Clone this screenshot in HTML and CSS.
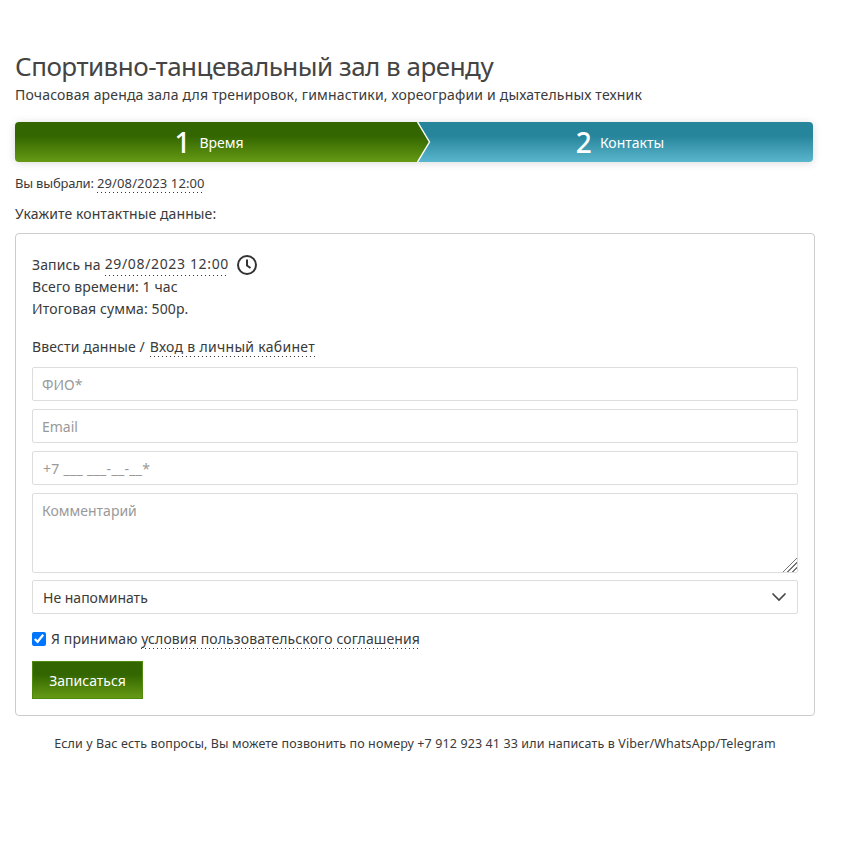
FILE: index.html
```html
<!DOCTYPE html>
<html lang="ru">
<head>
    <meta charset="UTF-8">
    <meta name="viewport" content="width=device-width, initial-scale=1.0">
    <title>Спортивно-танцевальный зал в аренду</title>
    <link rel="stylesheet" href="styles.css">
</head>
<body>
    <div class="container">
        <h1>Спортивно-танцевальный зал в аренду</h1>
        <p class="subtitle">Почасовая аренда зала для тренировок, гимнастики, хореографии и дыхательных техник</p>

        <div class="steps">
            <div class="step step-active">
                <span class="step-num">1</span>
                <span class="step-name">Время</span>
                <svg class="step-arrow" width="14" height="40" viewBox="0 0 14 40">
                    <defs>
                        <linearGradient id="arrowGreen" x1="0" y1="0" x2="0" y2="1">
                            <stop offset="0.35" stop-color="#336600"/>
                            <stop offset="1" stop-color="#669a14"/>
                        </linearGradient>
                    </defs>
                    <path d="M0 0 L12.5 20 L0 40 Z" fill="url(#arrowGreen)"/>
                    <path d="M0.5 0 L12.5 20 L0.5 40" fill="none" stroke="#fff" stroke-width="1.4"/>
                </svg>
            </div>
            <div class="step step-next">
                <span class="step-num">2</span>
                <span class="step-name">Контакты</span>
            </div>
        </div>

        <p class="chosen">Вы выбрали: <a class="dotted date" href="#">29/08/2023 12:00</a></p>
        <p class="prompt">Укажите контактные данные:</p>

        <form class="panel">
            <div class="summary">
                <div class="summary-line"><span>Запись на</span> <a class="dotted date" href="#">29/08/2023 12:00</a>
                    <svg class="clock" width="22" height="22" viewBox="0 0 22 22">
                        <circle cx="11" cy="11" r="9" fill="none" stroke="#333" stroke-width="2"/>
                        <path d="M11 5.5 V11.5 L14.5 14" fill="none" stroke="#333" stroke-width="2"/>
                    </svg>
                </div>
                <div>Всего времени: 1 час</div>
                <div>Итоговая сумма: 500р.</div>
            </div>
            <div class="login-line">Ввести данные / <a class="dotted login-link" href="#">Вход в личный кабинет</a></div>

            <input class="field" type="text" placeholder="ФИО*">
            <input class="field" type="text" placeholder="Email">
            <input class="field field-phone" type="text" placeholder="+7 ___ ___-__-__*">
            <textarea class="field field-area" placeholder="Комментарий"></textarea>
            <div class="select">
                <span>Не напоминать</span>
                <svg width="16" height="10" viewBox="0 0 16 10">
                    <path d="M1.5 1.5 L8 8 L14.5 1.5" fill="none" stroke="#444" stroke-width="1.6"/>
                </svg>
            </div>

            <label class="agree">
                <input type="checkbox" checked>
                <span>Я принимаю <a class="dotted" href="#">условия пользовательского соглашения</a></span>
            </label>
            <button class="submit" type="button">Записаться</button>
        </form>

        <p class="note">Если у Вас есть вопросы, Вы можете позвонить по номеру +7 912 923 41 33 или написать в Viber/WhatsApp/Telegram</p>
    </div>
</body>
</html>
```

FILE: styles.css
```css
body {
    font-family: "Noto Sans", "Open Sans", Arial, sans-serif;
    margin: 0;
    padding: 0;
    color: #3a3a3a;
    background-color: #fff;
    font-size: 14px;
}
a {
    color: inherit;
    text-decoration: none;
}
.container {
    width: 800px;
    margin-left: 15px;
    padding-top: 48px;
}
h1 {
    font-size: 26px;
    font-weight: 400;
    line-height: 36px;
    margin: 0 0 2px;
    letter-spacing: -0.5px;
    color: #444;
}
.subtitle {
    font-size: 14px;
    line-height: 18px;
    margin: 0 0 18px;
    letter-spacing: 0.17px;
}
.steps {
    display: flex;
    width: 798px;
    height: 40px;
    border-radius: 4px;
    box-shadow: 0 1px 8px rgba(0, 0, 0, 0.15);
}
.step {
    display: flex;
    align-items: center;
    justify-content: center;
    gap: 9px;
    color: #fff;
    position: relative;
    box-sizing: border-box;
}
.step-active {
    flex: 0 0 403px;
    padding-right: 15px;
    background: linear-gradient(#336600 35%, #669a14);
    border-radius: 4px 0 0 4px;
}
.step-next {
    flex: 1;
    gap: 8px;
    padding-left: 9px;
    background: linear-gradient(#27859b 35%, #5ab6cc);
    border-radius: 0 4px 4px 0;
}
.step-num {
    font-size: 28px;
    font-weight: 500;
    line-height: 40px;
}
.step-name {
    font-size: 14px;
}
.step-arrow {
    position: absolute;
    top: 0;
    right: -13px;
    z-index: 1;
}
.chosen {
    font-size: 13px;
    line-height: 18px;
    margin: 12px 0 0;
    letter-spacing: -0.2px;
}
.chosen .date {
    letter-spacing: 0.12px;
}
.prompt {
    line-height: 18px;
    margin: 13px 0 10px;
    letter-spacing: 0.1px;
}
/* sparse dots, a plain dotted border is too dense */
.dotted {
    padding-bottom: 1px;
    background: repeating-linear-gradient(to right, #333 0 1px, transparent 1px 4px) left bottom / 100% 1px no-repeat;
}
.panel {
    display: flex;
    flex-direction: column;
    align-items: flex-start;
    border: 1px solid #ccc;
    border-radius: 4px;
    padding: 19px 16px 16px;
    letter-spacing: 0.12px;
}
.summary {
    line-height: 22px;
}
.summary-line {
    display: flex;
    align-items: center;
    gap: 4px;
}
.summary-line .date {
    letter-spacing: 0.65px;
}
.clock {
    margin-left: 3px;
}
.login-line {
    line-height: 20px;
    margin: 17px 0 10px;
}
.login-link {
    margin-left: 1px;
    letter-spacing: 0.3px;
}
.field {
    display: block;
    box-sizing: border-box;
    width: 100%;
    height: 34px;
    margin: 0 0 8px;
    padding: 0 9px;
    border: 1px solid #ddd;
    border-radius: 2px;
    font-family: inherit;
    font-size: 14px;
    color: #333;
    background: #fff;
}
.field::placeholder {
    color: #999;
}
.field-phone {
    padding-left: 10px;
    letter-spacing: 0.3px;
}
.field-area {
    height: 80px;
    padding-top: 7px;
    margin-bottom: 7px;
}
.field-area::-webkit-resizer {
    background:
        linear-gradient(135deg, #fff 50%, transparent 50%),
        repeating-linear-gradient(135deg, #777 0 1.5px, #fff 1.5px 3.5px);
}
.select {
    display: flex;
    align-items: center;
    justify-content: space-between;
    box-sizing: border-box;
    width: 100%;
    height: 34px;
    padding: 0 10px;
    border: 1px solid #ddd;
    border-radius: 2px;
    letter-spacing: 0;
}
.agree {
    display: flex;
    align-items: center;
    gap: 5px;
    line-height: 20px;
    margin: 15px 0 12px;
}
.agree input {
    width: 14px;
    height: 14px;
    margin: 0;
}
.submit {
    width: 111px;
    height: 38px;
    border: 1px solid #4f8a0c;
    background: linear-gradient(#336600 35%, #669a14);
    color: #fff;
    font-family: inherit;
    font-size: 14px;
    padding: 0;
}
.note {
    font-size: 12.5px;
    line-height: 18px;
    text-align: center;
    margin: 19px 0 0;
    letter-spacing: 0.115px;
}
```
